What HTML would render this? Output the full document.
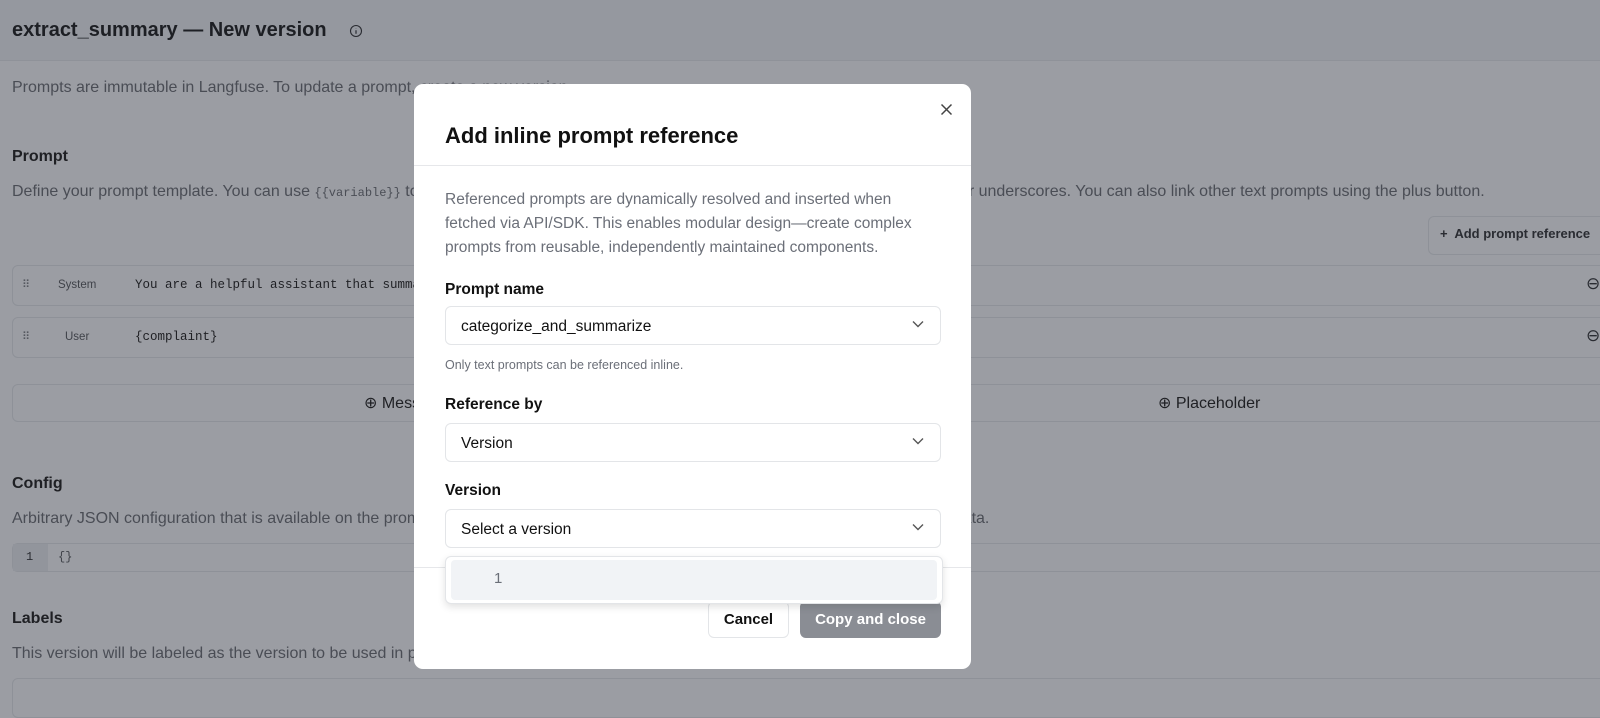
<!DOCTYPE html>
<html><head><meta charset="utf-8"><style>
*{box-sizing:border-box;margin:0;padding:0}
body{width:1600px;height:688px;overflow:hidden;background:#9b9da3;font-family:"Liberation Sans",sans-serif;position:relative;color:#1f2024}
.a{position:absolute;white-space:nowrap}
.hdr{position:absolute;left:0;top:0;width:1600px;height:61px;background:#95989f;border-bottom:1px solid #8f9299}
.muted{color:#4a4d55;font-size:16px}
.h{font-size:16px;font-weight:bold;color:#1f2024}
.box{position:absolute;border:1px solid #8e9198;border-radius:6px}
.mono{font-family:"Liberation Mono",monospace}
.modal{position:absolute;left:414px;top:84px;width:557px;height:585px;background:#fff;border-radius:9px}
.m{position:absolute;white-space:nowrap}
.inp{position:absolute;left:31px;width:496px;height:39px;border:1px solid #e3e5e8;border-radius:6px;font-size:15.5px;padding:11px 15px;color:#111}
.chev{position:absolute;right:16px;top:13px}
.lbl{font-size:15.5px;font-weight:bold;color:#111}
</style></head><body>
<div class="hdr"></div>
<div class="a" style="left:12px;top:19px;font-size:20px;font-weight:bold;color:#1d1f24">extract_summary — New version</div>
<svg class="a" style="left:349px;top:24px" width="14" height="14" viewBox="0 0 14 14"><circle cx="7" cy="7" r="5.5" fill="none" stroke="#2a2c32" stroke-width="1.1"/><path d="M7 6.2v3.6M7 4.3v.2" stroke="#2a2c32" stroke-width="1.2"/></svg>
<div class="a muted" style="left:12px;top:79px">Prompts are immutable in Langfuse. To update a prompt, create a new version.</div>
<div class="a h" style="left:12px;top:148px">Prompt</div>
<div class="a muted" style="left:12px;top:183px">Define your prompt template. You can use <span class="mono" style="font-size:12px">{{variable}}</span> to insert variables into your prompt. Variables must be alphabetical characters or underscores. You can also link other text prompts using the plus button.</div>
<div class="box" style="left:1428px;top:216px;width:190px;height:39px"></div>
<div class="a" style="left:1440px;top:226px;font-size:13px;font-weight:bold;color:#2a2c32">+&nbsp; Add prompt reference</div>
<div class="box" style="left:12px;top:265px;width:1610px;height:41px"></div>
<div class="a" style="left:22px;top:278px;font-size:11px;color:#55585f">⠿</div>
<div class="a" style="left:58px;top:279px;font-size:11.5px;color:#3f4249">System</div>
<div class="a mono" style="left:135px;top:278px;font-size:12.5px;color:#1f2024">You are a helpful assistant that summarizes complaints.</div>
<div class="a" style="left:1586px;top:274px;font-size:17px;color:#2a2c32">⊖</div>
<div class="box" style="left:12px;top:317px;width:1610px;height:41px"></div>
<div class="a" style="left:22px;top:330px;font-size:11px;color:#55585f">⠿</div>
<div class="a" style="left:65px;top:331px;font-size:11.5px;color:#3f4249">User</div>
<div class="a mono" style="left:135px;top:330px;font-size:12.5px;color:#1f2024">{complaint}</div>
<div class="a" style="left:1586px;top:326px;font-size:17px;color:#2a2c32">⊖</div>
<div class="box" style="left:12px;top:384px;width:780px;height:38px"></div>
<div class="a" style="left:364px;top:393px;font-size:16px;color:#1f2024">⊕ Message</div>
<div class="box" style="left:799px;top:384px;width:820px;height:38px"></div>
<div class="a" style="left:1158px;top:393px;font-size:16px;color:#1f2024">⊕ Placeholder</div>
<div class="a h" style="left:12px;top:475px">Config</div>
<div class="a muted" style="left:12px;top:510px">Arbitrary JSON configuration that is available on the prompt. Use this to track LLM parameters, function definitions, or any other metadata.</div>
<div class="box" style="left:12px;top:543px;width:1610px;height:29px"></div>
<div class="a" style="left:13px;top:544px;width:35px;height:27px;background:#92959c"></div>
<div class="a mono" style="left:26px;top:550px;font-size:12px;color:#2a2c32">1</div>
<div class="a mono" style="left:58px;top:550px;font-size:12px;color:#3f4249">{}</div>
<div class="a h" style="left:12px;top:610px">Labels</div>
<div class="a muted" style="left:12px;top:645px">This version will be labeled as the version to be used in production for this prompt.</div>
<div class="box" style="left:12px;top:678px;width:1610px;height:40px"></div>

<div class="modal">
<svg class="m" style="left:526px;top:19px" width="13" height="13" viewBox="0 0 13 13"><path d="M1.5 1.5l10 10M11.5 1.5l-10 10" stroke="#444" stroke-width="1.5"/></svg>
<div class="m" style="left:31px;top:39px;font-size:22px;font-weight:bold;color:#111">Add inline prompt reference</div>
<div class="m" style="left:0;top:81px;width:557px;height:1px;background:#e6e7ea"></div>
<div class="m" style="left:31px;top:104px;font-size:15.5px;line-height:24px;color:#6b6f78;white-space:normal;width:490px">Referenced prompts are dynamically resolved and inserted when fetched via API/SDK. This enables modular design—create complex prompts from reusable, independently maintained components.</div>
<div class="m lbl" style="left:31px;top:197px">Prompt name</div>
<div class="inp" style="top:222px">categorize_and_summarize<svg class="chev" width="12" height="8" viewBox="0 0 12 8"><path d="M1 1.5l5 5 5-5" fill="none" stroke="#555" stroke-width="1.4"/></svg></div>
<div class="m" style="left:31px;top:274px;font-size:12.5px;color:#6b6f78">Only text prompts can be referenced inline.</div>
<div class="m lbl" style="left:31px;top:312px">Reference by</div>
<div class="inp" style="top:339px">Version<svg class="chev" width="12" height="8" viewBox="0 0 12 8"><path d="M1 1.5l5 5 5-5" fill="none" stroke="#555" stroke-width="1.4"/></svg></div>
<div class="m lbl" style="left:31px;top:398px">Version</div>
<div class="inp" style="top:425px">Select a version<svg class="chev" width="12" height="8" viewBox="0 0 12 8"><path d="M1 1.5l5 5 5-5" fill="none" stroke="#555" stroke-width="1.4"/></svg></div>
<div class="m" style="left:0;top:483px;width:557px;height:1px;background:#e6e7ea"></div>
<div class="m" style="left:294px;top:517px;width:81px;height:37px;border:1px solid #e3e5e8;border-radius:6px;font-size:15px;font-weight:bold;color:#111;text-align:center;line-height:35px">Cancel</div>
<div class="m" style="left:386px;top:517px;width:141px;height:37px;background:#8a8d94;border-radius:6px;font-size:15px;font-weight:bold;color:#fff;text-align:center;line-height:37px">Copy and close</div>
<div class="m" style="left:31px;top:472px;width:498px;height:48px;background:#fff;border:1px solid #e3e5e8;border-radius:6px;box-shadow:0 3px 8px rgba(0,0,0,.12)">
<div style="position:absolute;left:5px;top:3px;width:486px;height:40px;background:#f1f3f6;border-radius:4px"></div>
<div style="position:absolute;left:48px;top:13px;font-size:15px;color:#6b6f78">1</div>
</div>
</div>
</body></html>
